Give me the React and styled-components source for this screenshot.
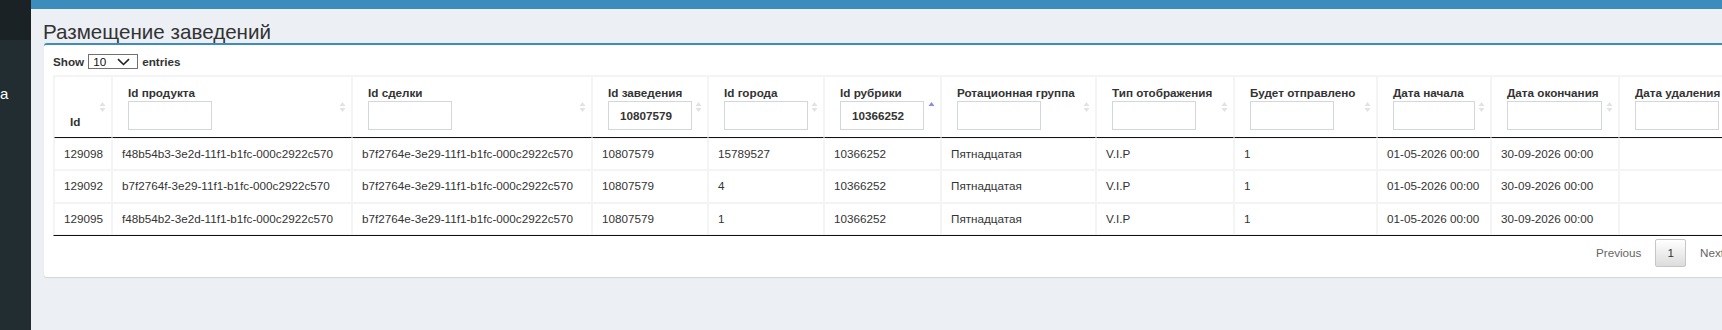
import React from 'react';
import styled, { createGlobalStyle } from 'styled-components';

const GlobalStyle = createGlobalStyle`
  html, body {
    margin: 0;
    padding: 0;
  }
  body {
    background: #ecf0f5;
    font-family: "Liberation Sans", Arial, sans-serif;
    color: #333;
    overflow: hidden;
  }
`;

const columns = [
  { title: 'Id', width: 58, noFilter: true },
  { title: 'Id продукта', width: 240 },
  { title: 'Id сделки', width: 240 },
  { title: 'Id заведения', width: 116, value: '10807579' },
  { title: 'Id города', width: 116 },
  { title: 'Id рубрики', width: 117, value: '10366252', sort: 'asc' },
  { title: 'Ротационная группа', width: 155 },
  { title: 'Тип отображения', width: 138 },
  { title: 'Будет отправлено', width: 143 },
  { title: 'Дата начала', width: 114, inputWidth: 82 },
  { title: 'Дата окончания', width: 128, inputWidth: 95 },
  { title: 'Дата удаления', width: 116 },
];

const rows = [
  ['129098', 'f48b54b3-3e2d-11f1-b1fc-000c2922c570', 'b7f2764e-3e29-11f1-b1fc-000c2922c570', '10807579', '15789527', '10366252', 'Пятнадцатая', 'V.I.P', '1', '01-05-2026 00:00', '30-09-2026 00:00', ''],
  ['129092', 'b7f2764f-3e29-11f1-b1fc-000c2922c570', 'b7f2764e-3e29-11f1-b1fc-000c2922c570', '10807579', '4', '10366252', 'Пятнадцатая', 'V.I.P', '1', '01-05-2026 00:00', '30-09-2026 00:00', ''],
  ['129095', 'f48b54b2-3e2d-11f1-b1fc-000c2922c570', 'b7f2764e-3e29-11f1-b1fc-000c2922c570', '10807579', '1', '10366252', 'Пятнадцатая', 'V.I.P', '1', '01-05-2026 00:00', '30-09-2026 00:00', ''],
];

const Layout = styled.div`
  display: flex;
  height: 100vh;
`;

const Sidebar = styled.aside`
  width: 31px;
  flex: none;
  background: #222d32;
  display: flex;
  flex-direction: column;
  overflow: hidden;
`;

const SidebarTop = styled.div`
  height: 40px;
  background: #1a2226;
`;

const SidebarItem = styled.div`
  margin-top: 45px;
  color: #fff;
  font-size: 15px;
  line-height: 17px;
`;

const Main = styled.div`
  flex: 1;
  min-width: 0;
  display: flex;
  flex-direction: column;
`;

const TopBar = styled.div`
  height: 9px;
  flex: none;
  background: #3c8dbc;
`;

const Content = styled.section`
  padding: 12px 0 0 13px;
`;

const Title = styled.h1`
  margin: 0 0 0 -1px;
  font-size: 20.6px;
  line-height: 21px;
  font-weight: normal;
  color: #333;
  white-space: nowrap;
`;

const Box = styled.div`
  margin-top: 1px;
  width: max-content;
  background: #fff;
  border-top: 2px solid #3c8dbc;
  border-radius: 3px;
  box-shadow: 0 1px 1px rgba(0, 0, 0, 0.12);
  padding: 9px 9px 10px;
`;

const LengthRow = styled.div`
  display: flex;
  align-items: center;
  gap: 4px;
  height: 15px;
  font-size: 11.7px;
  font-weight: bold;
`;

const SelectBox = styled.div`
  box-sizing: border-box;
  width: 50px;
  height: 15px;
  border: 1px solid #707070;
  display: flex;
  align-items: center;
  justify-content: space-between;
  padding: 0 7px 0 4px;
  font-weight: normal;
  font-size: 11.7px;
  color: #111;
`;

const Table = styled.table`
  margin-top: 6px;
  border-collapse: separate;
  border-spacing: 0;
  table-layout: fixed;
  width: 1683px;
  border: 1px solid #f4f4f4;
  border-bottom: 1px solid #111;
  font-size: 11.7px;
`;

const Th = styled.th`
  position: relative;
  box-sizing: border-box;
  width: ${p => p.$w}px;
  border: 1px solid #f4f4f4;
  border-bottom: 1px solid #111;
  padding: 7px 18px 7px 15px;
  text-align: left;
  vertical-align: bottom;
  font-weight: bold;
  color: #333;
  white-space: nowrap;
  overflow: hidden;
`;

const ThLabel = styled.div`
  line-height: 17px;
`;

const FilterInput = styled.input`
  display: block;
  box-sizing: border-box;
  width: ${p => p.$w}px;
  height: 29px;
  margin: 0;
  border: 1px solid #d2d6de;
  padding: 0 0 0 11px;
  font-family: inherit;
  font-size: 11.7px;
  font-weight: bold;
  color: #333;
  background: #fff;
  outline: none;
`;

const SortIcon = styled.svg`
  position: absolute;
  right: 5px;
  top: 50%;
  margin-top: -6px;
  width: 7px;
  height: 12px;
`;

const Td = styled.td`
  box-sizing: border-box;
  border: 1px solid #f4f4f4;
  padding: 7px 9px;
  line-height: 16.4px;
  color: #333;
  white-space: nowrap;
  overflow: hidden;
`;

const Pager = styled.div`
  margin-top: 3px;
  display: flex;
  justify-content: flex-end;
  gap: 2px;
`;

const PageButton = styled.span`
  box-sizing: border-box;
  min-width: 18px;
  height: 28px;
  padding: 5px 11px;
  border: 1px solid ${p => (p.$current ? '#c6c6c6' : 'transparent')};
  border-radius: 2px;
  background: ${p => (p.$current ? 'linear-gradient(to bottom, #fff 0%, #dcdcdc 100%)' : 'transparent')};
  color: ${p => (p.$current ? '#333' : '#666')};
  font-size: 11.7px;
  line-height: 16px;
  text-align: center;
`;

const Chevron = () => (
  <svg width="13" height="8" viewBox="0 0 13 8">
    <path d="M1 1.2 L6.5 6.5 L12 1.2" fill="none" stroke="#222" strokeWidth="1.6" />
  </svg>
);

const Sorter = ({ dir }) => (
  <SortIcon viewBox="0 0 7 12">
    {dir === 'asc' ? (
      <path d="M0.5 5 L3.5 1 L6.5 5 Z" fill="#8b8fd6" />
    ) : (
      <>
        <path d="M0.5 5 L3.5 1 L6.5 5 Z" fill="#e2e2e2" />
        <path d="M0.5 7 L3.5 11 L6.5 7 Z" fill="#e2e2e2" />
      </>
    )}
  </SortIcon>
);

const App = () => (
  <>
    <GlobalStyle />
    <Layout>
      <Sidebar>
        <SidebarTop />
        <SidebarItem>а</SidebarItem>
      </Sidebar>
      <Main>
        <TopBar />
        <Content>
          <Title>Размещение заведений</Title>
          <Box>
            <LengthRow>
              Show
              <SelectBox>
                10
                <Chevron />
              </SelectBox>
              entries
            </LengthRow>
            <Table>
              <thead>
                <tr>
                  {columns.map(col => (
                    <Th key={col.title} $w={col.width}>
                      <ThLabel>{col.title}</ThLabel>
                      {!col.noFilter && (
                        <FilterInput
                          $w={col.inputWidth || 84}
                          defaultValue={col.value || ''}
                          readOnly
                        />
                      )}
                      <Sorter dir={col.sort} />
                    </Th>
                  ))}
                </tr>
              </thead>
              <tbody>
                {rows.map(row => (
                  <tr key={row[0]}>
                    {row.map((cell, i) => (
                      <Td key={i}>{cell}</Td>
                    ))}
                  </tr>
                ))}
              </tbody>
            </Table>
            <Pager>
              <PageButton>Previous</PageButton>
              <PageButton $current>1</PageButton>
              <PageButton>Next</PageButton>
            </Pager>
          </Box>
        </Content>
      </Main>
    </Layout>
  </>
);

export default App;
